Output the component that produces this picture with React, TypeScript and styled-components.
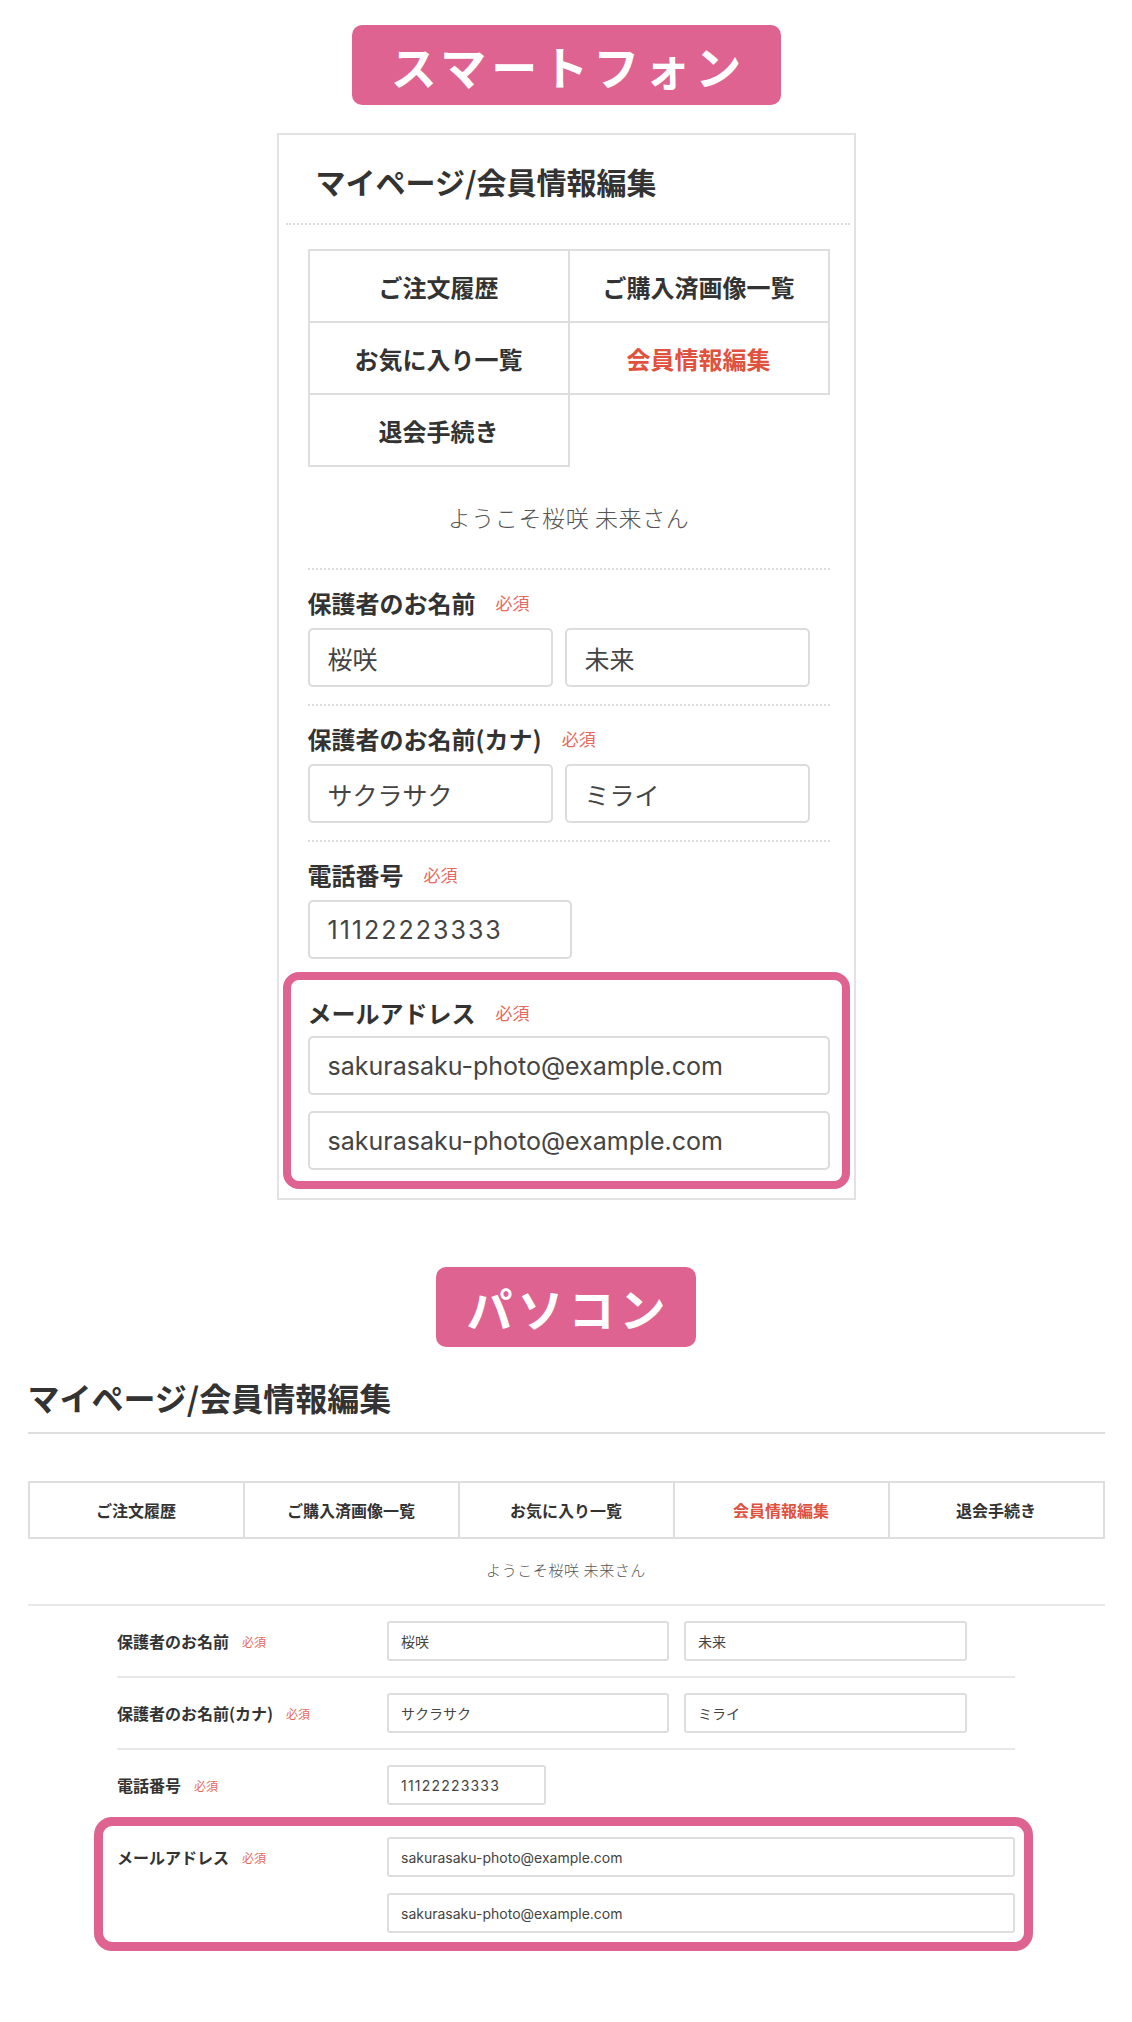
import styled, { createGlobalStyle } from 'styled-components'

const GlobalStyle = createGlobalStyle`
  body {
    margin: 0;
    background: #fff;
    color: #333;
    font-family: 'Noto Sans CJK JP', 'Noto Sans', sans-serif;
  }
`

const Page = styled.div`
  width: 1132px;
  display: flex;
  flex-direction: column;
  align-items: center;
  padding-top: 25px;
`

const Badge = styled.div<{ $width: number; $top?: number }>`
  width: ${(p) => p.$width}px;
  height: 80px;
  margin-top: ${(p) => p.$top ?? 0}px;
  box-sizing: border-box;
  padding-left: 5px;
  display: flex;
  align-items: center;
  justify-content: center;
  background: #df6390;
  border-radius: 10px;
  color: #fff;
  font-size: 46px;
  font-weight: 700;
  letter-spacing: 5px;
`

/* ---------- smartphone ---------- */

const PhoneFrame = styled.div`
  width: 579px;
  margin-top: 28px;
  box-sizing: border-box;
  border: 2px solid #e2e2e2;
`

const PhoneHeader = styled.div`
  margin: 0 4px 0 7px;
  padding: 26px 0 22px 30px;
  border-bottom: 2px dotted #dcdcdc;

  h1 {
    margin: 0;
    font-size: 30px;
    line-height: 40px;
    font-weight: 700;
    color: #333;
  }
`

const PhoneBody = styled.div`
  padding: 0 24px 9px 29px;
`

const NavGrid = styled.div<{ $cols: number; $cell: number; $font: number }>`
  display: grid;
  grid-template-columns: repeat(${(p) => p.$cols}, 1fr);
  border-top: 2px solid #dedede;
  border-left: 2px solid #dedede;
  font-size: ${(p) => p.$font}px;
  font-weight: 700;

  div {
    height: ${(p) => p.$cell}px;
    display: flex;
    align-items: center;
    justify-content: center;
    border-right: 2px solid #dedede;
    border-bottom: 2px solid #dedede;
    color: #333;
  }

  .active {
    color: #e0513e;
  }
`

const PhoneNav = styled(NavGrid)`
  margin-top: 24px;
`

const Welcome = styled.p<{ $size: number; $gapTop: number; $gapBottom: number }>`
  margin: ${(p) => p.$gapTop}px 0 ${(p) => p.$gapBottom}px;
  text-align: center;
  font-size: ${(p) => p.$size}px;
  line-height: 1.4;
  font-weight: 300;
  letter-spacing: 0.6px;
  color: #555;
`

const PhoneSection = styled.div<{ $flush?: boolean }>`
  border-top: 2px dotted #dcdcdc;
  padding: 15px 0 ${(p) => (p.$flush ? 13 : 17)}px;
`

const PhoneLabel = styled.div`
  display: flex;
  align-items: center;
  height: 34px;
  margin-bottom: 9px;
  font-size: 24px;
  font-weight: 700;
  color: #333;
`

const Required = styled.span<{ $size: number; $gap: number }>`
  margin-left: ${(p) => p.$gap}px;
  font-size: ${(p) => p.$size}px;
  font-weight: 400;
  color: #e8695c;
`

const InputRow = styled.div<{ $gap: number }>`
  display: flex;
  gap: ${(p) => p.$gap}px;
`

const InputColumn = styled.div<{ $gap: number }>`
  display: flex;
  flex-direction: column;
  gap: ${(p) => p.$gap}px;
`

const PhoneInput = styled.input<{ $width?: number; $digits?: boolean }>`
  width: ${(p) => (p.$width ? `${p.$width}px` : '100%')};
  height: 59px;
  box-sizing: border-box;
  margin: 0;
  padding: 0 18px;
  border: 2px solid #dcdcdc;
  border-radius: 5px;
  background: #fff;
  font-family: Inter, 'Noto Sans CJK JP', sans-serif;
  font-size: 25px;
  letter-spacing: ${(p) => (p.$digits ? 2 : 0)}px;
  color: #444;
  outline: none;
`

const PhoneHighlight = styled.div`
  margin: 0 -20px 0 -25px;
  padding: 15px 12px 11px 17px;
  border: 8px solid #df6390;
  border-radius: 16px;

  ${PhoneLabel} {
    margin-bottom: 7px;
  }
`

/* ---------- desktop ---------- */

const Desktop = styled.div`
  width: 1077px;
  margin-top: 28px;
`

const PcTitle = styled.h1`
  margin: 0;
  padding-bottom: 13px;
  border-bottom: 2px solid #dedede;
  font-size: 32px;
  line-height: 44px;
  font-weight: 700;
  color: #333;
`

const PcNav = styled(NavGrid)`
  margin-top: 47px;
`

const PcForm = styled.div`
  border-top: 2px solid #e8e8e8;
`

const PcRows = styled.div`
  width: 898px;
  margin: 0 auto;
`

const PcRow = styled.div<{ $flush?: boolean }>`
  display: grid;
  grid-template-columns: 270px 1fr;
  align-items: center;
  padding: 15px 0 ${(p) => (p.$flush ? 12 : 15)}px;
  border-bottom: ${(p) => (p.$flush ? 'none' : '2px solid #e8e8e8')};
`

const PcLabel = styled.div`
  display: flex;
  align-items: center;
  height: 40px;
  font-size: 16px;
  font-weight: 700;
  color: #333;
`

const PcInput = styled.input<{ $width?: number; $digits?: boolean }>`
  width: ${(p) => (p.$width ? `${p.$width}px` : '100%')};
  height: 40px;
  box-sizing: border-box;
  margin: 0;
  padding: 0 12px;
  border: 2px solid #dedede;
  border-radius: 3px;
  background: #fff;
  font-family: Inter, 'Noto Sans CJK JP', sans-serif;
  font-size: 14px;
  letter-spacing: ${(p) => (p.$digits ? 1.2 : 0)}px;
  color: #444;
  outline: none;
`

const PcHighlight = styled.div`
  display: grid;
  grid-template-columns: 270px 1fr;
  align-items: start;
  margin: 0 -18px 0 -23px;
  padding: 11px 9px 9px 14px;
  border: 9px solid #df6390;
  border-radius: 18px;
`

const navItems = ['ご注文履歴', 'ご購入済画像一覧', 'お気に入り一覧', '会員情報編集', '退会手続き']
const ACTIVE = '会員情報編集'
const EMAIL = 'sakurasaku-photo@example.com'

function Nav({ variant }: { variant: 'phone' | 'pc' }) {
  const cells = navItems.map((item) => (
    <div key={item} className={item === ACTIVE ? 'active' : undefined}>
      {item}
    </div>
  ))
  if (variant === 'phone') {
    return (
      <PhoneNav $cols={2} $cell={70} $font={24}>
        {cells}
      </PhoneNav>
    )
  }
  return (
    <PcNav $cols={5} $cell={54} $font={16}>
      {cells}
    </PcNav>
  )
}

function PhoneView() {
  return (
    <PhoneFrame>
      <PhoneHeader>
        <h1>マイページ/会員情報編集</h1>
      </PhoneHeader>
      <PhoneBody>
        <Nav variant="phone" />
        <Welcome $size={23} $gapTop={34} $gapBottom={35}>
          ようこそ桜咲 未来さん
        </Welcome>

        <PhoneSection>
          <PhoneLabel>
            保護者のお名前<Required $size={17} $gap={20}>必須</Required>
          </PhoneLabel>
          <InputRow $gap={12}>
            <PhoneInput $width={245} value="桜咲" readOnly />
            <PhoneInput $width={245} value="未来" readOnly />
          </InputRow>
        </PhoneSection>

        <PhoneSection>
          <PhoneLabel>
            保護者のお名前(カナ)<Required $size={17} $gap={20}>必須</Required>
          </PhoneLabel>
          <InputRow $gap={12}>
            <PhoneInput $width={245} value="サクラサク" readOnly />
            <PhoneInput $width={245} value="ミライ" readOnly />
          </InputRow>
        </PhoneSection>

        <PhoneSection $flush>
          <PhoneLabel>
            電話番号<Required $size={17} $gap={20}>必須</Required>
          </PhoneLabel>
          <PhoneInput $width={264} $digits value="11122223333" readOnly />
        </PhoneSection>

        <PhoneHighlight>
          <PhoneLabel>
            メールアドレス<Required $size={17} $gap={20}>必須</Required>
          </PhoneLabel>
          <InputColumn $gap={16}>
            <PhoneInput value={EMAIL} readOnly />
            <PhoneInput value={EMAIL} readOnly />
          </InputColumn>
        </PhoneHighlight>
      </PhoneBody>
    </PhoneFrame>
  )
}

function DesktopView() {
  return (
    <Desktop>
      <PcTitle>マイページ/会員情報編集</PcTitle>
      <Nav variant="pc" />
      <Welcome $size={15} $gapTop={20} $gapBottom={24}>
        ようこそ桜咲 未来さん
      </Welcome>
      <PcForm>
        <PcRows>
          <PcRow>
            <PcLabel>
              保護者のお名前<Required $size={12} $gap={13}>必須</Required>
            </PcLabel>
            <InputRow $gap={15}>
              <PcInput $width={282} value="桜咲" readOnly />
              <PcInput $width={283} value="未来" readOnly />
            </InputRow>
          </PcRow>
          <PcRow>
            <PcLabel>
              保護者のお名前(カナ)<Required $size={12} $gap={13}>必須</Required>
            </PcLabel>
            <InputRow $gap={15}>
              <PcInput $width={282} value="サクラサク" readOnly />
              <PcInput $width={283} value="ミライ" readOnly />
            </InputRow>
          </PcRow>
          <PcRow $flush>
            <PcLabel>
              電話番号<Required $size={12} $gap={13}>必須</Required>
            </PcLabel>
            <div>
              <PcInput $width={159} $digits value="11122223333" readOnly />
            </div>
          </PcRow>
          <PcHighlight>
            <PcLabel>
              メールアドレス<Required $size={12} $gap={13}>必須</Required>
            </PcLabel>
            <InputColumn $gap={16}>
              <PcInput value={EMAIL} readOnly />
              <PcInput value={EMAIL} readOnly />
            </InputColumn>
          </PcHighlight>
        </PcRows>
      </PcForm>
    </Desktop>
  )
}

export default function App() {
  return (
    <>
      <GlobalStyle />
      <Page>
        <Badge $width={429}>スマートフォン</Badge>
        <PhoneView />
        <Badge $width={260} $top={67}>
          パソコン
        </Badge>
        <DesktopView />
      </Page>
    </>
  )
}
